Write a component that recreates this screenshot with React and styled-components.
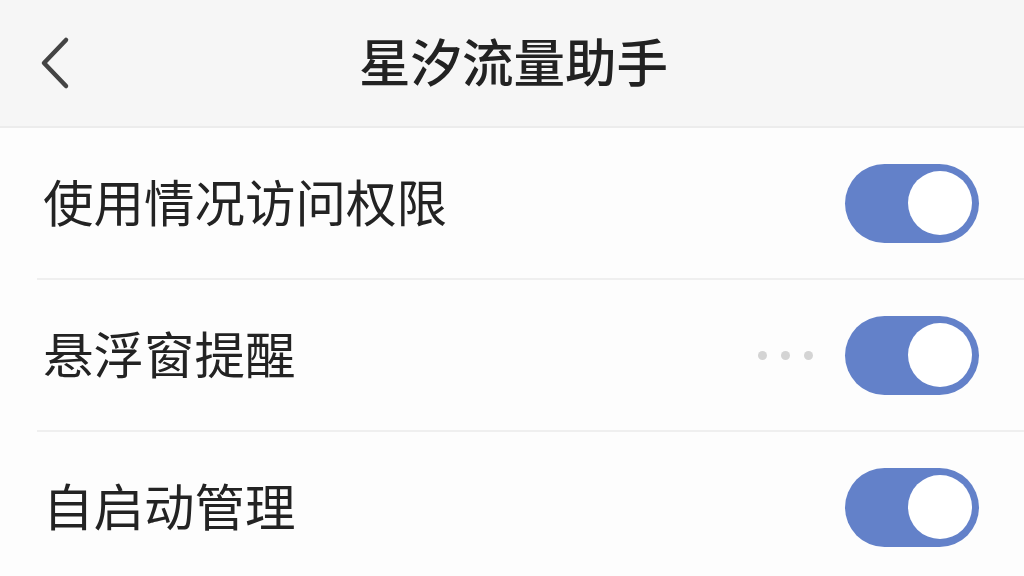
import React, { useState } from 'react';
import styled, { createGlobalStyle } from 'styled-components';

const GlobalStyle = createGlobalStyle`
  html, body {
    margin: 0;
    padding: 0;
    background: #fdfdfd;
    font-family: "Noto Sans CJK SC", "Noto Sans", sans-serif;
  }
`;

const Page = styled.div`
  width: 1024px;
  height: 576px;
  overflow: hidden;
  background: #fdfdfd;
`;

const Header = styled.div`
  height: 126px;
  display: grid;
  grid-template-columns: 120px 1fr 120px;
  align-items: center;
  background: #f6f6f6;
  border-bottom: 2px solid #ececec;
`;

const BackButton = styled.button`
  border: none;
  background: none;
  padding: 0 0 0 36px;
  display: flex;
  align-items: center;
  cursor: pointer;
`;

const Title = styled.h1`
  margin: 0;
  text-align: center;
  font-size: 51.5px;
  font-weight: 500;
  color: #222;
  padding: 0 0 8px 3px;
`;

const List = styled.div`
  display: flex;
  flex-direction: column;
`;

const Row = styled.div`
  height: 150px;
  margin-left: 37px;
  padding: 0 45px 0 6px;
  display: flex;
  align-items: center;
  border-bottom: ${(p) => (p.$last ? 'none' : '2px solid #efefef')};
`;

const Label = styled.span`
  flex: 1;
  font-size: 50.5px;
  font-weight: 400;
  color: #232323;
  padding-bottom: 7px;
`;

const Dots = styled.div`
  display: flex;
  gap: 14px;
  margin-right: 32px;
`;

const Dot = styled.span`
  width: 9px;
  height: 9px;
  border-radius: 50%;
  background: #d4d4d4;
`;

const Switch = styled.button`
  width: 134px;
  height: 79px;
  border-radius: 40px;
  border: none;
  padding: 0 7px;
  background: ${(p) => (p.$on ? '#6381c9' : '#d8d8d8')};
  display: flex;
  align-items: center;
  justify-content: ${(p) => (p.$on ? 'flex-end' : 'flex-start')};
  cursor: pointer;
`;

const Knob = styled.span`
  width: 64px;
  height: 64px;
  border-radius: 50%;
  background: #fff;
`;

const items = [
  { label: '使用情况访问权限' },
  { label: '悬浮窗提醒', dots: true },
  { label: '自启动管理' },
];

export default function App() {
  const [on, setOn] = useState([true, true, true]);

  const toggle = (i) => setOn(on.map((v, j) => (j === i ? !v : v)));

  return (
    <Page>
      <GlobalStyle />
      <Header>
        <BackButton>
          <svg width="36" height="54" viewBox="0 0 36 54" fill="none">
            <path d="M30 4 L8 27 L30 50" stroke="#444" strokeWidth="4.5" strokeLinecap="round" strokeLinejoin="round" />
          </svg>
        </BackButton>
        <Title>星汐流量助手</Title>
        <div />
      </Header>
      <List>
        {items.map((item, i) => (
          <Row key={item.label} $last={i === items.length - 1}>
            <Label>{item.label}</Label>
            {item.dots && (
              <Dots>
                <Dot />
                <Dot />
                <Dot />
              </Dots>
            )}
            <Switch $on={on[i]} onClick={() => toggle(i)}>
              <Knob />
            </Switch>
          </Row>
        ))}
      </List>
    </Page>
  );
}
